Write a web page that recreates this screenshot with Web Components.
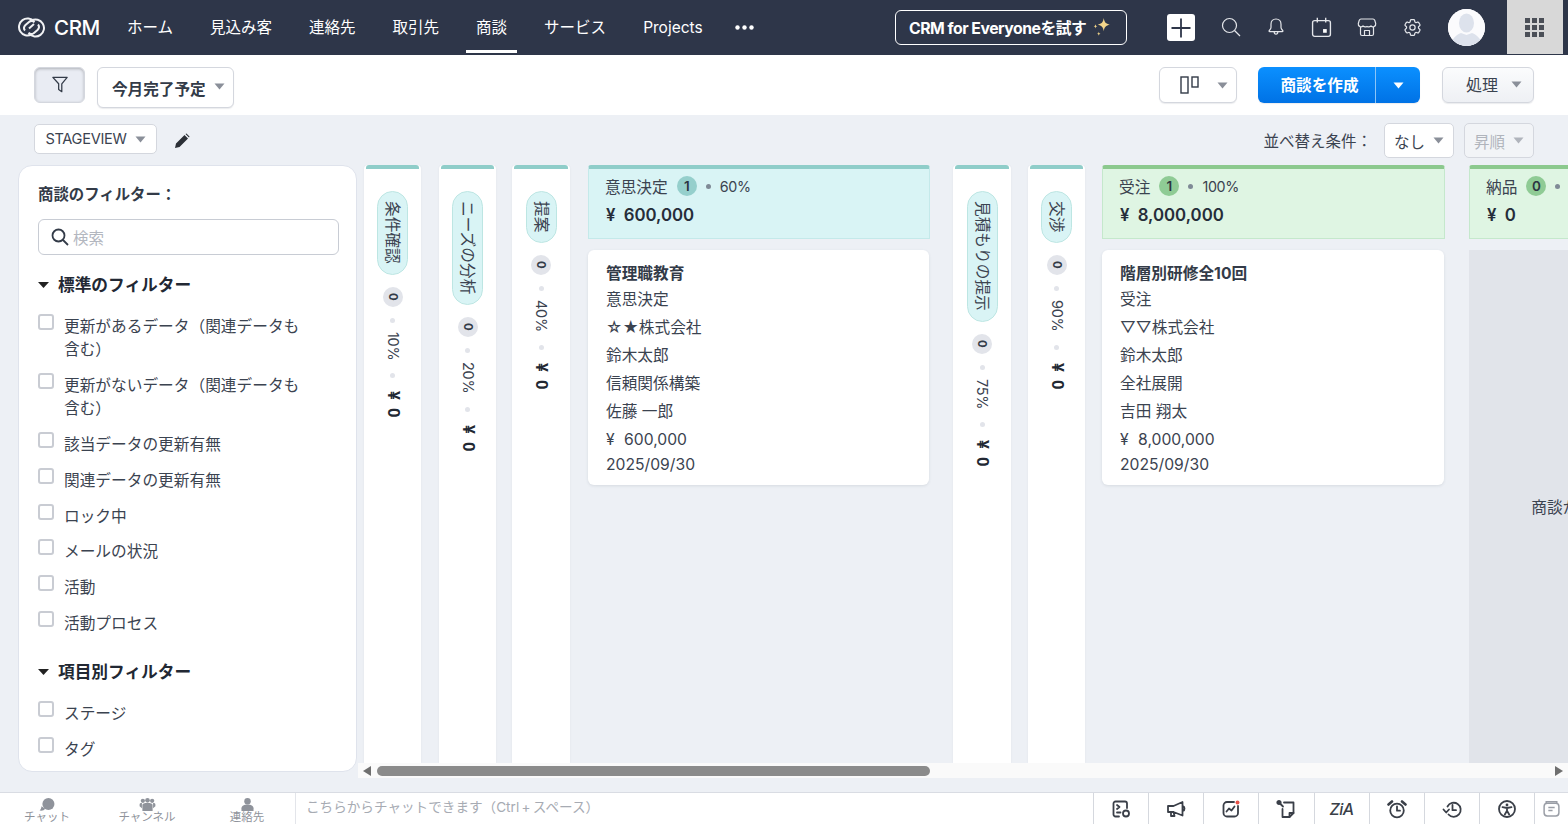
<!DOCTYPE html>
<html lang="ja">
<head>
<meta charset="utf-8">
<title>CRM</title>
<style>
	html, body { margin: 0; height: 100%; overflow: hidden; }
	body {
		display: flex;
		flex-direction: column;
		width: 1568px;
		height: 824px;
		background: #edf0f5;
		color: #333b48;
		font-family: Inter, 'Noto Sans CJK JP', sans-serif;
	}
</style>
</head>
<body>
	<crm-topbar></crm-topbar>
	<crm-toolbar></crm-toolbar>
	<crm-subbar></crm-subbar>
	<crm-workspace>
		<filter-panel slot="side"></filter-panel>
		<stage-rail label="条件確認" percent="10%"></stage-rail>
		<stage-rail label="ニーズの分析" percent="20%" style="margin-left:18px"></stage-rail>
		<stage-rail label="提案" percent="40%" style="margin-left:16px;width:58px"></stage-rail>
		<stage-open label="意思決定" count="1" percent="60%" amount="¥ 600,000" style="margin-left:18px;width:342px">
			<deal-card>
				<b>管理職教育</b>
				<span>意思決定</span>
				<span>☆★株式会社</span>
				<span>鈴木太郎</span>
				<span>信頼関係構築</span>
				<span>佐藤 一郎</span>
				<span class="money">¥ 600,000</span>
				<span>2025/09/30</span>
			</deal-card>
		</stage-open>
		<stage-rail label="見積もりの提示" percent="75%" style="margin-left:23px;width:58px"></stage-rail>
		<stage-rail label="交渉" percent="90%" style="margin-left:17px"></stage-rail>
		<stage-open label="受注" count="1" percent="100%" amount="¥ 8,000,000" tone="won" style="margin-left:17px">
			<deal-card>
				<b>階層別研修全10回</b>
				<span>受注</span>
				<span>▽▽株式会社</span>
				<span>鈴木太郎</span>
				<span>全社展開</span>
				<span>吉田 翔太</span>
				<span class="money">¥ 8,000,000</span>
				<span>2025/09/30</span>
			</deal-card>
		</stage-open>
		<stage-open label="納品" count="0" percent="100%" amount="¥ 0" tone="won" empty style="margin-left:24px">
		</stage-open>
	</crm-workspace>
	<crm-chatbar></crm-chatbar>

<script>
const caret = (color = '#8a8f99') => `<svg width="11" height="7" viewBox="0 0 11 7"><path d="M.5.5h10L5.5 6.5z" fill="${color}"/></svg>`;

class CrmTopbar extends HTMLElement {
	constructor() {
		super();
		this.attachShadow({ mode: 'open' });
	}

	connectedCallback() {
		const items = ['ホーム', '見込み客', '連絡先', '取引先', '商談', 'サービス', 'Projects'];
		this.shadowRoot.innerHTML = `
			<style>
				:host {
					display: flex;
					align-items: center;
					flex: none;
					height: 55px;
					background: #2e3649;
					color: #fff;
				}
				.logo { display: flex; align-items: center; margin-left: 18px; width: 109px; flex: none; }
				.logo span { font-size: 20.500px; font-weight: 500; margin-left: 9px; letter-spacing: -.4px; }
				nav { display: flex; gap: 37px; align-items: center; height: 55px; }
				nav a { position: relative; font-size: 15.500px; line-height: 55px; white-space: nowrap; }
				nav a.on::after {
					content: '';
					position: absolute;
					left: -10px;
					right: -10px;
					top: 50px;
					height: 3px;
					background: #fff;
				}
				.more { margin-left: 32px; flex: none; display: flex; }
				.try {
					display: flex;
					align-items: center;
					justify-content: center;
					gap: 4px;
					box-sizing: border-box;
					width: 232px;
					height: 35px;
					margin-left: 141px;
					border: 1px solid #fff;
					border-radius: 6px;
					font-size: 15.800px;
					font-weight: 700;
					letter-spacing: -.5px;
					flex: none;
				}
				.plus {
					display: flex;
					align-items: center;
					justify-content: center;
					width: 28px;
					height: 27px;
					margin-left: 40px;
					background: #fff;
					border-radius: 3px;
					flex: none;
				}
				.icons { display: flex; margin-left: 14px; flex: none; }
				.icons span { display: flex; justify-content: center; width: 45.200px; }
				.avatar {
					width: 37px;
					height: 37px;
					margin-left: 13px;
					border-radius: 50%;
					background: #fff;
					overflow: hidden;
					flex: none;
				}
				.apps {
					display: flex;
					align-items: center;
					justify-content: center;
					width: 56px;
					height: 54px;
					margin-left: 22px;
					align-self: flex-start;
					background: #d8d8d8;
					flex: none;
				}
			</style>
			<div class="logo">
				<svg width="27" height="21" viewBox="0 0 27 21" fill="none" stroke="#f1f2f4" stroke-width="2">
					<path d="M16 4.500A8.500 8.500 0 1 0 13.500 17.500"/>
					<path d="M11 16.500A8.500 8.500 0 1 0 13.500 3.500"/>
					<path d="M7 13.500c-1.500-1.800-1-4 .5-5.500l3.500-3c1.800-1.500 4-1.300 5.500.2"/>
					<path d="M20 7.500c1.500 1.800 1 4-.5 5.500l-3.500 3c-1.800 1.500-4 1.300-5.500-.2"/>
					<path d="M11 11.500l5-4.500"/>
				</svg>
				<span>CRM</span>
			</div>
			<nav>
				${items.map((t) => `<a class="${t === '商談' ? 'on' : ''}">${t}</a>`).join('')}
			</nav>
			<div class="more">
				<svg width="19" height="5" viewBox="0 0 19 5" fill="#fff"><circle cx="2.500" cy="2.500" r="2.200"/><circle cx="9.500" cy="2.500" r="2.200"/><circle cx="16.500" cy="2.500" r="2.200"/></svg>
			</div>
			<div class="try">
				<span>CRM for Everyoneを試す</span>
				<svg width="22" height="22" viewBox="0 0 20 20" fill="#f4d68a">
					<path d="M12.500 1c.6 4 1.900 5.300 5.500 6-3.600.7-4.900 2-5.500 6-.6-4-1.900-5.300-5.500-6 3.600-.7 4.900-2 5.500-6z"/>
					<path d="M5 6.500c.2 1.200.7 1.700 1.800 2-1.100.3-1.600.8-1.800 2-.2-1.200-.7-1.700-1.800-2 1.100-.3 1.600-.8 1.800-2z"/>
					<path d="M8 13.500c.2 1.200.6 1.600 1.600 1.800-1 .2-1.400.6-1.600 1.800-.2-1.200-.6-1.600-1.600-1.800 1-.2 1.400-.6 1.600-1.800z"/>
				</svg>
			</div>
			<div class="plus">
				<svg width="20" height="20" viewBox="0 0 20 20" stroke="#2e3649" stroke-width="1.800"><path d="M10 .5v19M.5 10h19"/></svg>
			</div>
			<div class="icons">
				<span><svg width="20" height="20" viewBox="0 0 20 20" fill="none" stroke="#e4e6ea" stroke-width="1.200"><circle cx="8.500" cy="8.500" r="7"/><path d="M13.500 13.500l5.500 5.500"/></svg></span>
				<span><svg width="20" height="20" viewBox="0 0 20 20" fill="none" stroke="#e4e6ea" stroke-width="1.200" stroke-linejoin="round"><path d="M10 2c3 0 5 2.200 5 5.200v3.300c0 1.300 1 2.200 1.800 3.100.4.500.1 1.100-.5 1.100H3.700c-.6 0-.9-.6-.5-1.100C4 12.700 5 11.800 5 10.500V7.200C5 4.200 7 2 10 2z"/><path d="M8.200 15c0 1 .7 2.200 1.800 2.200s1.800-1.200 1.800-2.200"/></svg></span>
				<span><svg width="21" height="21" viewBox="0 0 20 20" fill="none" stroke="#e4e6ea" stroke-width="1.300"><rect x="1.500" y="3.500" width="17" height="15" rx="2"/><path d="M6 .8v4.400M14 .8v4.400"/><rect x="11.500" y="11.500" width="3.500" height="3.500" fill="#fff" stroke="none"/></svg></span>
				<span><svg width="20" height="20" viewBox="0 0 20 20" fill="none" stroke="#e4e6ea" stroke-width="1.200" stroke-linejoin="round"><path d="M4 2h12a2 2 0 0 1 1.700 1.200l1 3.300a2.800 2.800 0 0 1-4.700 2.500 3.300 3.300 0 0 1-4 .4 3.300 3.300 0 0 1-4-.4A2.800 2.800 0 0 1 1.300 6.500l1-3.300A2 2 0 0 1 4 2z"/><path d="M3.500 10v7a1.500 1.500 0 0 0 1.500 1.500h10a1.500 1.500 0 0 0 1.500-1.500v-7"/><path d="M7.500 18.500v-5h5v5"/></svg></span>
				<span><svg width="21" height="21" viewBox="0 0 24 24" fill="none" stroke="#e4e6ea" stroke-width="1.400"><path d="M9.594 3.940c.09-.542.56-.94 1.110-.94h2.593c.55 0 1.020.398 1.110.94l.213 1.281c.063.374.313.686.645.870.074.04.147.083.22.127.325.196.72.257 1.075.124l1.217-.456a1.125 1.125 0 0 1 1.370.49l1.296 2.247a1.125 1.125 0 0 1-.26 1.431l-1.003.827c-.293.241-.438.613-.43.992a7.723 7.723 0 0 1 0 .255c-.008.378.137.75.43.991l1.004.827c.424.35.534.955.26 1.430l-1.298 2.247a1.125 1.125 0 0 1-1.369.491l-1.217-.456c-.355-.133-.75-.072-1.076.124a6.470 6.470 0 0 1-.22.128c-.331.183-.581.495-.644.869l-.213 1.281c-.09.543-.56.94-1.110.94h-2.594c-.55 0-1.019-.398-1.110-.94l-.213-1.281c-.062-.374-.312-.686-.644-.870a6.520 6.520 0 0 1-.22-.127c-.325-.196-.72-.257-1.076-.124l-1.217.456a1.125 1.125 0 0 1-1.369-.49l-1.297-2.247a1.125 1.125 0 0 1 .26-1.431l1.004-.827c.292-.24.437-.613.43-.991a6.932 6.932 0 0 1 0-.255c.007-.38-.138-.751-.43-.992l-1.004-.827a1.125 1.125 0 0 1-.26-1.430l1.297-2.247a1.125 1.125 0 0 1 1.370-.491l1.216.456c.356.133.751.072 1.076-.124.072-.044.146-.086.22-.128.332-.183.582-.495.644-.869l.214-1.280z"/><circle cx="12" cy="12" r="3"/></svg></span>
			</div>
			<div class="avatar">
				<svg width="37" height="37" viewBox="0 0 37 37"><rect width="37" height="37" fill="#fbfbfd"/><ellipse cx="18.500" cy="14" rx="7.500" ry="9.500" fill="#dde2ec"/><path d="M3 37c0-8 7-12 10-13l5.500 2 5.500-2c3 1 10 5 10 13z" fill="#dde2ec"/></svg>
			</div>
			<div class="apps">
				<svg width="19" height="19" viewBox="0 0 19 19" fill="#4b4f57">
					<rect width="5" height="5"/><rect x="7" width="5" height="5"/><rect x="14" width="5" height="5"/>
					<rect y="7" width="5" height="5"/><rect x="7" y="7" width="5" height="5"/><rect x="14" y="7" width="5" height="5"/>
					<rect y="14" width="5" height="5"/><rect x="7" y="14" width="5" height="5"/><rect x="14" y="14" width="5" height="5"/>
				</svg>
			</div>
		`;
	}
}

class CrmToolbar extends HTMLElement {
	constructor() {
		super();
		this.attachShadow({ mode: 'open' });
	}

	connectedCallback() {
		this.shadowRoot.innerHTML = `
			<style>
				:host {
					display: flex;
					align-items: flex-start;
					flex: none;
					box-sizing: border-box;
					height: 60px;
					padding: 12px 34px 0;
					background: #fff;
				}
				.btn {
					display: flex;
					align-items: center;
					box-sizing: border-box;
					height: 36px;
					border: 1px solid #d4d7de;
					border-radius: 6px;
					background: #fff;
					box-shadow: 0 1px 1px rgba(60, 70, 90, .1);
					flex: none;
				}
				.filter {
					justify-content: center;
					width: 51px;
					padding-bottom: 2px;
					background: #e9ecf3;
					box-shadow: inset 0 1px 3px rgba(0, 0, 0, .25);
				}
				.view {
					gap: 8px;
					height: 41px;
					width: 137px;
					margin-left: 12px;
					padding: 1px 0 0 14px;
					font-size: 15.600px;
					font-weight: 600;
					color: #333b48;
				}
				.view svg { margin-top: -3px; }
				.space { flex: 1; }
				.layout { width: 78px; gap: 17px; padding-left: 20px; }
				.create {
					width: 162px;
					margin-left: 21px;
					border: 0;
					background: linear-gradient(#0b90ff, #0072e5);
					color: #fff;
					font-size: 15.600px;
					font-weight: 700;
				}
				.create span { display: flex; align-items: center; justify-content: center; height: 100%; }
				.create .main { box-sizing: border-box; width: 118px; padding: 0 0 3px 6px; border-right: 1px solid #8cc5f7; }
				.create .arrow { flex: 1; }
				.action {
					gap: 13px;
					width: 92px;
					margin-left: 22px;
					padding: 0 0 2px 23px;
					background: linear-gradient(#fbfcfd, #eef0f4);
					font-size: 16px;
					color: #3b4350;
				}
			</style>
			<div class="btn filter">
				<svg width="18" height="17" viewBox="0 0 18 19" fill="none" stroke="#333b48" stroke-width="1.400" stroke-linejoin="round"><path d="M1 1.500h16l-6 7.200v8.800L7.500 15V8.700z"/></svg>
			</div>
			<div class="btn view">今月完了予定 ${caret()}</div>
			<div class="space"></div>
			<div class="btn layout">
				<svg width="20" height="18" viewBox="0 0 20 18" fill="none" stroke="#333b48" stroke-width="1.400"><rect x="1" y="1" width="7" height="16"/><rect x="12" y="1" width="6" height="10"/></svg>
				${caret()}
			</div>
			<div class="btn create">
				<span class="main">商談を作成</span>
				<span class="arrow">${caret('#fff')}</span>
			</div>
			<div class="btn action">処理 ${caret()}</div>
		`;
	}
}

class CrmSubbar extends HTMLElement {
	constructor() {
		super();
		this.attachShadow({ mode: 'open' });
	}

	connectedCallback() {
		this.shadowRoot.innerHTML = `
			<style>
				:host {
					display: flex;
					align-items: flex-start;
					flex: none;
					box-sizing: border-box;
					height: 50px;
					padding: 8px 34px 0;
					background: #edf0f5;
					font-size: 15.500px;
					color: #3b4350;
				}
				.box {
					display: flex;
					align-items: center;
					box-sizing: border-box;
					border: 1px solid #d4d7de;
					border-radius: 5px;
					background: #fff;
					flex: none;
				}
				.stage {
					justify-content: center;
					gap: 8px;
					width: 123px;
					height: 30px;
					margin-top: 1px;
					font-size: 14.600px;
					letter-spacing: -.3px;
				}
				.pen { margin: 10px 0 0 17px; flex: none; }
				.space { flex: 1; }
				.label { margin: 9px 12px 0 0; line-height: 20px; }
				.sort { justify-content: center; gap: 8px; width: 70px; height: 35px; }
				.order { margin-left: 10px; color: #b0b4bc; background: #f2f4f7; }
			</style>
			<div class="box stage">STAGEVIEW ${caret()}</div>
			<svg class="pen" width="16" height="16" viewBox="0 0 16 16" fill="#2b2f36"><path d="M1 15l1-4.500L10.500 2l3.500 3.500L5.500 14zM11.500 1l1-.5 3 3-.5 1z"/></svg>
			<div class="space"></div>
			<div class="label">並べ替え条件：</div>
			<div class="box sort">なし ${caret()}</div>
			<div class="box sort order">昇順 ${caret('#b0b4bc')}</div>
		`;
	}
}

class CrmWorkspace extends HTMLElement {
	constructor() {
		super();
		this.attachShadow({ mode: 'open' });
	}

	connectedCallback() {
		this.shadowRoot.innerHTML = `
			<style>
				:host {
					display: flex;
					flex: none;
					height: 627px;
					padding-left: 18px;
					box-sizing: border-box;
				}
				.right { display: flex; flex-direction: column; margin-left: 1px; flex: 1; min-width: 0; }
				.board {
					display: flex;
					align-items: stretch;
					height: 598px;
					padding-left: 6px;
					overflow: hidden;
					flex: none;
				}
				.scroll {
					display: flex;
					align-items: center;
					height: 15px;
					padding: 0 5px;
					background: #fafafa;
					flex: none;
				}
				.thumb {
					width: 553px;
					height: 10px;
					margin-left: 6px;
					border-radius: 5px;
					background: #8b8b8b;
				}
				.space { flex: 1; }
			</style>
			<slot name="side"></slot>
			<div class="right">
				<div class="board"><slot></slot></div>
				<div class="scroll">
					<svg width="8" height="10" viewBox="0 0 8 10" fill="#6f6f6f"><path d="M8 0v10L0 5z"/></svg>
					<div class="thumb"></div>
					<div class="space"></div>
					<svg width="8" height="10" viewBox="0 0 8 10" fill="#6f6f6f"><path d="M0 0v10l8-5z"/></svg>
				</div>
			</div>
		`;
	}
}

class FilterItem extends HTMLElement {
	constructor() {
		super();
		this.attachShadow({ mode: 'open' });
	}

	connectedCallback() {
		this.shadowRoot.innerHTML = `
			<style>
				:host {
					display: flex;
					align-items: flex-start;
					gap: 10px;
					width: 272px;
					font-size: 15.700px;
					line-height: 23px;
					color: #3b4350;
				}
				i {
					display: block;
					box-sizing: border-box;
					width: 16px;
					height: 16px;
					margin-top: -1px;
					border: 2px solid #c9ccd3;
					border-radius: 3px;
					background: #fff;
					flex: none;
				}
			</style>
			<i></i>
			<div><slot></slot></div>
		`;
	}
}

class FilterPanel extends HTMLElement {
	constructor() {
		super();
		this.attachShadow({ mode: 'open' });
	}

	connectedCallback() {
		const arrow = '<svg width="11" height="6" viewBox="0 0 11 6"><path d="M0 0h11L5.500 6z" fill="#222"/></svg>';
		this.shadowRoot.innerHTML = `
			<style>
				:host {
					display: block;
					box-sizing: border-box;
					width: 339px;
					height: 607px;
					padding: 18px 17px 0 19px;
					border: 1px solid #dfe3ec;
					border-radius: 14px;
					background: #fff;
					flex: none;
				}
				h3 { margin: 0; font-size: 15.400px; font-weight: 600; line-height: 22px; color: #333b48; }
				.search {
					display: flex;
					align-items: center;
					gap: 4px;
					box-sizing: border-box;
					height: 36px;
					margin-top: 13px;
					padding-left: 12px;
					border: 1px solid #c8ccd4;
					border-radius: 6px;
					font-size: 15.500px;
					color: #b3b7bf;
				}
				h4 {
					display: flex;
					align-items: center;
					gap: 9px;
					margin: 19px 0 0;
					font-size: 16.700px;
					font-weight: 700;
					line-height: 22px;
					color: #222833;
				}
				.list { display: flex; flex-direction: column; gap: 12.900px; margin-top: 19px; }
				h4.second { margin-top: 26px; }
			</style>
			<h3>商談のフィルター：</h3>
			<div class="search">
				<svg width="18" height="18" viewBox="0 0 18 18" fill="none" stroke="#333b48" stroke-width="1.800"><circle cx="7.500" cy="7.500" r="6"/><path d="M12 12l5 5"/></svg>
				検索
			</div>
			<h4>${arrow}標準のフィルター</h4>
			<div class="list">
				<filter-item>更新があるデータ（関連データも含む）</filter-item>
				<filter-item>更新がないデータ（関連データも含む）</filter-item>
				<filter-item>該当データの更新有無</filter-item>
				<filter-item>関連データの更新有無</filter-item>
				<filter-item>ロック中</filter-item>
				<filter-item>メールの状況</filter-item>
				<filter-item>活動</filter-item>
				<filter-item>活動プロセス</filter-item>
			</div>
			<h4 class="second">${arrow}項目別フィルター</h4>
			<div class="list">
				<filter-item>ステージ</filter-item>
				<filter-item>タグ</filter-item>
			</div>
		`;
	}
}

class StageRail extends HTMLElement {
	constructor() {
		super();
		this.attachShadow({ mode: 'open' });
	}

	connectedCallback() {
		const label = this.getAttribute('label');
		const percent = this.getAttribute('percent');
		this.shadowRoot.innerHTML = `
			<style>
				:host {
					display: flex;
					flex-direction: column;
					align-items: center;
					box-sizing: border-box;
					width: 57px;
					padding-top: 26px;
					border-radius: 4px 4px 0 0;
					background: #fff;
					box-shadow: 0 0 2px rgba(60, 70, 90, .08);
					position: relative;
					flex: none;
				}
				:host::before {
					content: '';
					position: absolute;
					top: 0;
					left: 2px;
					right: 2px;
					height: 4px;
					border-radius: 3px 3px 0 0;
					background: #8fcdc9;
				}
				.pill {
					box-sizing: border-box;
					width: 31px;
					padding: 9px 0 10px;
					border: 1px solid #bde6e3;
					border-radius: 16px;
					background: #d9f4f5;
					writing-mode: vertical-rl;
					text-orientation: sideways;
					display: flex;
					align-items: center;
					font-size: 15.700px;
					line-height: 29px;
					color: #3b4350;
				}
				.count {
					display: flex;
					align-items: center;
					justify-content: center;
					width: 20px;
					height: 20px;
					margin-top: 12px;
					border-radius: 50%;
					background: #e2e4ea;
					writing-mode: vertical-rl;
					font-size: 11.500px;
					font-weight: 700;
					color: #333b48;
				}
				.dot {
					width: 5px;
					height: 5px;
					margin: 11px 0;
					border-radius: 50%;
					background: #e2e4ea;
				}
				.pct, .sum { writing-mode: vertical-rl; line-height: 20px; }
				.pct { margin: -2px 0 2px; font-size: 14.500px; letter-spacing: -.3px; color: #3b4350; }
				.sum { margin-top: 2px; font-family: Roboto, sans-serif; font-size: 16.500px; font-weight: 700; word-spacing: 4px; color: #222833; }
			</style>
			<div class="pill">${label}</div>
			<div class="count">0</div>
			<div class="dot"></div>
			<div class="pct">${percent}</div>
			<div class="dot"></div>
			<div class="sum">¥ 0</div>
		`;
	}
}

class StageOpen extends HTMLElement {
	constructor() {
		super();
		this.attachShadow({ mode: 'open' });
	}

	connectedCallback() {
		const won = this.getAttribute('tone') === 'won';
		const empty = this.hasAttribute('empty');
		this.shadowRoot.innerHTML = `
			<style>
				:host {
					display: flex;
					flex-direction: column;
					width: 343px;
					flex: none;
				}
				.head {
					box-sizing: border-box;
					height: 74px;
					padding: 7px 17px 0;
					border: 1px solid ${won ? '#c5e8cc' : '#c4e9ea'};
					border-top: 4px solid ${won ? '#8cc98e' : '#8fcdc9'};
					border-radius: 3px 3px 0 0;
					background: ${won ? '#dff5e3' : '#d9f4f5'};
				}
				.title { display: flex; align-items: center; height: 20px; margin-left: -1px; font-size: 15.700px; color: #3b4350; }
				.count {
					display: flex;
					align-items: center;
					justify-content: center;
					width: 20px;
					height: 20px;
					margin-left: 9px;
					border-radius: 50%;
					background: ${won ? '#8fcb95' : '#95cfcc'};
					font-size: 13.500px;
					font-weight: 600;
					color: #2c3442;
				}
				.dot { width: 5px; height: 5px; margin: 0 9px; border-radius: 50%; background: #7f8a96; }
				.pct { font-size: 14.300px; letter-spacing: -.3px; }
				.amount {
					margin-top: 8px;
					font-size: 16.800px;
					font-weight: 600;
					word-spacing: 4px;
					line-height: 22px;
					color: #262d39;
				}
				.body { display: flex; flex-direction: column; flex: 1; margin-top: 11px; min-height: 0; }
				.none {
					flex: 1;
					display: flex;
					align-items: center;
					justify-content: center;
					background: #e1e4ea;
					font-size: 15.700px;
					color: #3b4350;
					white-space: nowrap;
				}
			</style>
			<div class="head">
				<div class="title">
					${this.getAttribute('label')}
					<span class="count">${this.getAttribute('count')}</span>
					<span class="dot"></span>
					<span class="pct">${this.getAttribute('percent')}</span>
				</div>
				<div class="amount">${this.getAttribute('amount')}</div>
			</div>
			<div class="body">
				${empty ? '<div class="none">商談が見つかりませんでした。</div>' : '<slot></slot>'}
			</div>
		`;
	}
}

class DealCard extends HTMLElement {
	constructor() {
		super();
		this.attachShadow({ mode: 'open' });
	}

	connectedCallback() {
		this.shadowRoot.innerHTML = `
			<style>
				:host {
					display: flex;
					flex-direction: column;
					box-sizing: border-box;
					width: calc(100% - 1px);
					height: 235px;
					padding: 12px 18px 0;
					border-radius: 6px;
					background: #fff;
					box-shadow: 0 1px 3px rgba(60, 70, 90, .12);
					font-size: 15.700px;
					color: #3b4350;
				}
				::slotted(*) { display: block; line-height: 28px; white-space: nowrap; }
				::slotted(b) { font-weight: 700; line-height: 24px; color: #333b48; }
				::slotted(.money) { word-spacing: 5px; }
				::slotted(span:last-child) { line-height: 22px; }
			</style>
			<slot></slot>
		`;
	}
}

class ChatTool extends HTMLElement {
	constructor() {
		super();
		this.attachShadow({ mode: 'open' });
	}

	connectedCallback() {
		this.shadowRoot.innerHTML = `
			<style>
				:host {
					display: flex;
					flex-direction: column;
					align-items: center;
					justify-content: flex-start;
					width: 100px;
					padding-top: 5px;
					font-size: 11.500px;
					line-height: 13px;
					color: #8f939b;
					flex: none;
				}
				::slotted(svg) { display: block; }
			</style>
			<slot name="icon"></slot>
			<div><slot></slot></div>
		`;
	}
}

class CrmChatbar extends HTMLElement {
	constructor() {
		super();
		this.attachShadow({ mode: 'open' });
	}

	connectedCallback() {
		const s = 'fill="none" stroke="#3a3f48" stroke-width="1.800" stroke-linejoin="round" stroke-linecap="round"';
		const tools = [
			`<path d="M8 17.500H4.500a2 2 0 0 1-2-2v-11a2 2 0 0 1 2-2h9.500a2 2 0 0 1 2 2v4.500"/><path d="M6 6l2.500 2L6 10M6 13.500h3.500"/><circle cx="15" cy="14.500" r="3"/>`,
			`<path d="M2 7h5.500L16.500 3v13.500L7.500 13H2zM5 13v4h3.500L7.500 13M17 7c2 .8 2 4 0 5"/>`,
			`<path d="M13 3H6a3.500 3.500 0 0 0-3.500 3.500V14A3.500 3.500 0 0 0 6 17.500h7.500A3.500 3.500 0 0 0 17 14V7"/><path d="M5.500 12.500l2.500-3 2.500 2 3-4"/><circle cx="16.500" cy="3.500" r="2" fill="#e8534a" stroke="none"/>`,
			`<path d="M3.500 4l3.500 3.500M8 3.500h9.500v10.500l-4 4H6.500v-8"/><circle cx="3" cy="3.500" r="1.700" fill="#3a3f48"/><path d="M13.500 18v-4h4"/>`,
			null,
			`<circle cx="10" cy="11.500" r="6.800"/><path d="M10 7.500v4.200h3"/><path d="M1.500 5.500L5 2.500M18.500 5.500L15 2.500" stroke-width="2.600"/>`,
			`<path d="M5.500 7.500a7 7 0 1 1 1 8M10.500 6v5.200h3.500"/><path d="M1.500 10.500l2.700 3 2.800-3"/>`,
			`<circle cx="10" cy="10" r="8"/><circle cx="10" cy="6" r="1.400" fill="#3a3f48" stroke="none"/><path d="M5.500 8.200l4.500.8 4.500-.8M10 9v2.800M10 11.800l-2.200 3.700M10 11.800l2.200 3.700"/>`,
		];
		this.shadowRoot.innerHTML = `
			<style>
				:host {
					display: flex;
					flex: none;
					box-sizing: border-box;
					height: 32px;
					background: #fff;
					border-top: 1px solid #d9dce3;
					overflow: hidden;
				}
				.left { display: flex; width: 295px; flex: none; margin-left: -3px; margin-right: 3px; }
				.input {
					flex: 1;
					padding-left: 10px;
					border-left: 1px solid #e3e5ea;
					font-size: 13.600px;
					word-spacing: -1.500px;
					line-height: 29px;
					white-space: nowrap;
					color: #a7abb3;
				}
				.tool {
					display: flex;
					align-items: center;
					justify-content: center;
					box-sizing: border-box;
					width: 55.125px;
					border-left: 1px solid #d5d8de;
					flex: none;
				}
				.zia {
					font-size: 16px;
					font-style: italic;
					font-weight: 500;
					letter-spacing: -.5px;
					color: #3a3f48;
				}
				.last {
					display: flex;
					align-items: center;
					justify-content: center;
					box-sizing: border-box;
					width: 34px;
					border-left: 1px solid #d5d8de;
					flex: none;
				}
			</style>
			<div class="left">
				<chat-tool>
					<svg slot="icon" width="17" height="14" viewBox="0 0 17 14" fill="#8f939b"><circle cx="9.500" cy="6.500" r="6.500"/><path d="M2 9c0 2-1 3.500-2 4.500 3 .5 5-.5 6-2z"/></svg>
					チャット
				</chat-tool>
				<chat-tool>
					<svg slot="icon" width="17" height="14" viewBox="0 0 17 14" fill="#8f939b"><circle cx="3.500" cy="3" r="2.300"/><circle cx="8.500" cy="2.500" r="2.500"/><circle cx="13.500" cy="3" r="2.300"/><path d="M3 14V7.500C3 6 5 5.500 8.500 5.500S14 6 14 7.500V14zM0 9V7c0-1 1-1.500 2.500-1.500V11zM17 9V7c0-1-1-1.500-2.500-1.500V11z"/></svg>
					チャンネル
				</chat-tool>
				<chat-tool>
					<svg slot="icon" width="15" height="14" viewBox="0 0 15 14" fill="#8f939b"><circle cx="7.500" cy="3.500" r="3.500"/><path d="M1 14v-3c0-2.500 3-4 6.500-4S14 8.500 14 11v3z"/></svg>
					連絡先
				</chat-tool>
			</div>
			<div class="input">こちらからチャットできます（Ctrl + スペース）</div>
			${tools.map((d) => `<div class="tool">${d ? `<svg width="20" height="20" viewBox="0 0 20 20" ${s}>${d}</svg>` : '<span class="zia">ZiA</span>'}</div>`).join('')}
			<div class="last">
				<svg width="19" height="19" viewBox="0 0 18 18" fill="none" stroke="#9a9ea6" stroke-width="1.400"><rect x="2" y="4" width="14" height="12" rx="3"/><path d="M4 4V2.500h10V4M6 8h6M6 11h4"/></svg>
			</div>
		`;
	}
}

customElements.define('crm-topbar', CrmTopbar);
customElements.define('crm-toolbar', CrmToolbar);
customElements.define('crm-subbar', CrmSubbar);
customElements.define('crm-workspace', CrmWorkspace);
customElements.define('filter-item', FilterItem);
customElements.define('filter-panel', FilterPanel);
customElements.define('stage-rail', StageRail);
customElements.define('stage-open', StageOpen);
customElements.define('deal-card', DealCard);
customElements.define('chat-tool', ChatTool);
customElements.define('crm-chatbar', CrmChatbar);
</script>
</body>
</html>
